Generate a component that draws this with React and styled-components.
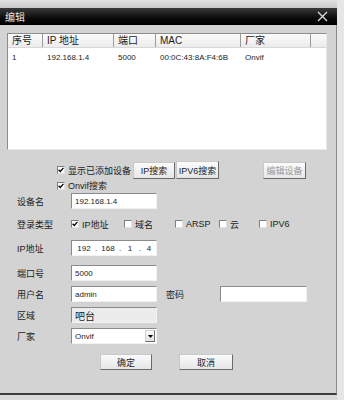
import React from "react";
import styled, { createGlobalStyle } from "styled-components";

const GlobalStyle = createGlobalStyle`
  html, body {
    margin: 0;
    padding: 0;
    background: #e4e4e4;
  }
  body {
    font-family: "Liberation Sans", "Noto Sans CJK SC", sans-serif;
    font-size: 9px;
    color: #1c1c1c;
  }
`;

const cjk = `"Liberation Sans", "Noto Sans CJK SC", sans-serif`;

const Page = styled.div`
  width: 344px;
  height: 400px;
  overflow: hidden;
  display: flex;
  flex-direction: column;
  background: #e6e6e6;
`;

const TopStrip = styled.div`
  height: 8px;
  flex: none;
  width: 337px;
  background: linear-gradient(#e2e2e2, #c8c8c8);
`;

const Dialog = styled.div`
  width: 337px;
  flex: none;
  display: flex;
  flex-direction: column;
`;

const TitleBar = styled.div`
  height: 17px;
  display: flex;
  align-items: center;
  justify-content: space-between;
  padding: 0 9px 0 5px;
  background: linear-gradient(#3a3a3a, #0a0a0a 60%, #000);
`;

const Title = styled.span`
  color: #e8e8e8;
  font-size: 10px;
  font-family: ${cjk};
`;

const Body = styled.div`
  height: 360px;
  background: #d3d3d3;
  border-bottom: 2px solid #3c3c3c;
  border-right: 1px solid #8a8a8a;
  padding: 8px 0 0 7px;
  display: flex;
  flex-direction: column;
`;

const ListBox = styled.div`
  width: 318px;
  height: 115px;
  flex: none;
  background: #fff;
  border: 1px solid #8c8c8c;
  border-right-color: #e8e8e8;
  border-bottom-color: #e8e8e8;
`;

const HeadRow = styled.div`
  display: flex;
  height: 13px;
  background: linear-gradient(#fbfbfb, #ececec);
  border-bottom: 1px solid #d8d8d8;
`;

const HeadCell = styled.div`
  width: ${(p) => p.$w}px;
  flex: ${(p) => (p.$grow ? 1 : "none")};
  box-sizing: border-box;
  padding-left: 4px;
  border-right: ${(p) => (p.$grow ? "none" : "1px solid #9a9a9a")};
  font-size: 10px;
  line-height: 13px;
  font-family: ${cjk};
  white-space: nowrap;
`;

const DataRow = styled.div`
  display: flex;
  height: 12px;
  margin-top: 4px;
`;

const DataCell = styled.div`
  width: ${(p) => p.$w}px;
  box-sizing: border-box;
  padding-left: 4px;
  font-size: 8px;
  line-height: 12px;
  white-space: nowrap;
`;

const Row = styled.div`
  display: flex;
  flex: none;
  align-items: center;
  height: ${(p) => p.$h || 16}px;
  margin-top: ${(p) => p.$top}px;
  padding-left: ${(p) => (p.$indent ?? 10)}px;
`;

const Label = styled.div`
  width: ${(p) => p.$w || 54}px;
  margin-left: ${(p) => p.$left || 0}px;
  flex: none;
  font-size: 9px;
  font-family: ${cjk};
  white-space: nowrap;
`;

const Check = styled.span`
  width: 8px;
  height: 8px;
  flex: none;
  box-sizing: border-box;
  background: #fff;
  border: 1px solid #808080;
  border-right-color: #e0e0e0;
  border-bottom-color: #e0e0e0;
  display: inline-flex;
  align-items: center;
  justify-content: center;
`;

const CheckItem = styled.label`
  display: inline-flex;
  align-items: center;
  gap: 3px;
  width: ${(p) => (p.$w ? `${p.$w}px` : "auto")};
  flex: none;
  font-size: 9px;
  font-family: ${cjk};
  white-space: nowrap;
`;

const Button = styled.div`
  width: ${(p) => p.$w}px;
  height: ${(p) => p.$h || 16}px;
  margin-left: ${(p) => p.$left || 0}px;
  flex: none;
  box-sizing: border-box;
  display: flex;
  align-items: center;
  justify-content: center;
  background: linear-gradient(#fbfbfb, #e6e6e6);
  border: 1px solid #c8c8c8;
  border-right-color: #6a6a6a;
  border-bottom-color: #6a6a6a;
  color: ${(p) => (p.$disabled ? "#9a9a9a" : "#1c1c1c")};
  font-size: 9px;
  font-family: ${cjk};
  white-space: nowrap;
`;

const Field = styled.div`
  width: ${(p) => p.$w || 86}px;
  height: 16px;
  flex: none;
  box-sizing: border-box;
  display: flex;
  align-items: center;
  padding-left: 3px;
  background: ${(p) => (p.$disabled ? "#ececec" : "#fff")};
  border: 1px solid #8a8a8a;
  border-right-color: #f2f2f2;
  border-bottom-color: #f2f2f2;
  font-size: ${(p) => (p.$cjk ? 10 : 8)}px;
  font-family: ${cjk};
  white-space: nowrap;
  position: relative;
`;

const Octet = styled.span`
  width: ${(p) => p.$w}px;
  text-align: center;
  font-size: 8px;
  flex: none;
`;

const Dot = styled.span`
  width: 6px;
  text-align: center;
  font-size: 8px;
  flex: none;
`;

const DropArrow = styled.span`
  position: absolute;
  right: 1px;
  top: 1px;
  width: 10px;
  height: 12px;
  box-sizing: border-box;
  background: linear-gradient(#fafafa, #e4e4e4);
  border: 1px solid #d0d0d0;
  border-right-color: #707070;
  border-bottom-color: #707070;
  display: flex;
  align-items: center;
  justify-content: center;
`;

const Footer = styled.div`
  flex: 1;
  min-height: 0;
  overflow: hidden;
  width: 337px;
  padding-left: 138px;
  padding-top: 5px;
  box-sizing: border-box;
  background: #dadada;
`;

const CheckMark = () => (
  <svg width="6" height="6" viewBox="0 0 6 6">
    <path d="M0.6 2.8 L2.3 4.5 L5.4 0.9" stroke="#000" strokeWidth="1.3" fill="none" />
  </svg>
);

const Box = ({ on }) => <Check>{on && <CheckMark />}</Check>;

const cols = [35, 71, 42, 85, 70];

export default function App() {
  return (
    <>
      <GlobalStyle />
      <Page>
        <TopStrip />
        <Dialog>
          <TitleBar>
            <Title>编辑</Title>
            <svg width="11" height="11" viewBox="0 0 11 11">
              <path d="M1 1 L10 10 M10 1 L1 10" stroke="#d8d8d8" strokeWidth="1.4" />
            </svg>
          </TitleBar>
          <Body>
            <ListBox>
              <HeadRow>
                <HeadCell $w={cols[0]}>序号</HeadCell>
                <HeadCell $w={cols[1]}>IP 地址</HeadCell>
                <HeadCell $w={cols[2]}>端口</HeadCell>
                <HeadCell $w={cols[3]}>MAC</HeadCell>
                <HeadCell $w={cols[4]}>厂家</HeadCell>
                <HeadCell $grow />
              </HeadRow>
              <DataRow>
                <DataCell $w={cols[0]}>1</DataCell>
                <DataCell $w={cols[1]}>192.168.1.4</DataCell>
                <DataCell $w={cols[2]}>5000</DataCell>
                <DataCell $w={cols[3]}>00:0C:43:8A:F4:6B</DataCell>
                <DataCell $w={cols[4]}>Onvif</DataCell>
              </DataRow>
            </ListBox>

            <Row $top={11} $h={18} $indent={50}>
              <CheckItem $w={76}>
                <Box on />
                显示已添加设备
              </CheckItem>
              <Button $w={42} $h={17}>IP搜索</Button>
              <Button $w={43} $h={18} $left={1}>IPV6搜索</Button>
              <Button $w={43} $h={17} $left={44} $disabled>编辑设备</Button>
            </Row>
            <Row $top={1} $h={11} $indent={50}>
              <CheckItem>
                <Box on />
                Onvif搜索
              </CheckItem>
            </Row>

            <Row $top={2}>
              <Label>设备名</Label>
              <Field>192.168.1.4</Field>
            </Row>
            <Row $top={7}>
              <Label>登录类型</Label>
              <CheckItem $w={53}>
                <Box on />
                IP地址
              </CheckItem>
              <CheckItem $w={51}>
                <Box />
                域名
              </CheckItem>
              <CheckItem $w={44}>
                <Box />
                ARSP
              </CheckItem>
              <CheckItem $w={40}>
                <Box />
                云
              </CheckItem>
              <CheckItem>
                <Box />
                IPV6
              </CheckItem>
            </Row>
            <Row $top={8}>
              <Label>IP地址</Label>
              <Field>
                <Octet $w={18}>192</Octet>
                <Dot>.</Dot>
                <Octet $w={18}>168</Octet>
                <Dot>.</Dot>
                <Octet $w={14}>1</Octet>
                <Dot>.</Dot>
                <Octet $w={12}>4</Octet>
              </Field>
            </Row>
            <Row $top={9}>
              <Label>端口号</Label>
              <Field>5000</Field>
            </Row>
            <Row $top={5}>
              <Label>用户名</Label>
              <Field>admin</Field>
              <Label $left={9}>密码</Label>
              <Field $w={87} />
            </Row>
            <Row $top={5}>
              <Label>区域</Label>
              <Field $disabled $cjk>吧台</Field>
            </Row>
            <Row $top={5}>
              <Label>厂家</Label>
              <Field>
                Onvif
                <DropArrow>
                  <svg width="5" height="3" viewBox="0 0 5 3">
                    <path d="M0 0 H5 L2.5 3 Z" fill="#000" />
                  </svg>
                </DropArrow>
              </Field>
            </Row>
            <Row $top={10} $indent={93}>
              <Button $w={52}>确定</Button>
              <Button $w={54} $left={27}>取消</Button>
            </Row>
          </Body>
        </Dialog>
        <Footer>
          <Button $w={53} $h={14}>确定</Button>
        </Footer>
      </Page>
    </>
  );
}
